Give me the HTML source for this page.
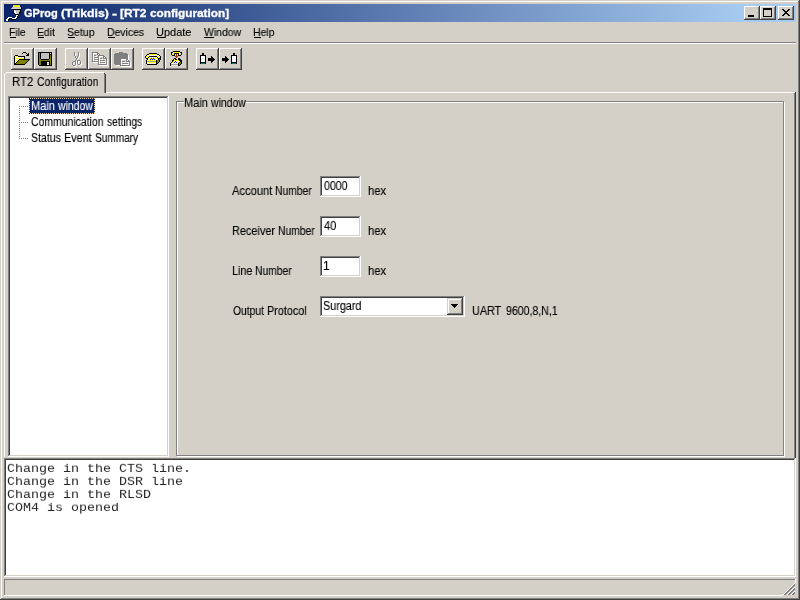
<!DOCTYPE html>
<html>
<head>
<meta charset="utf-8">
<title>GProg (Trikdis) - [RT2 configuration]</title>
<style>
*,*:before,*:after{box-sizing:border-box;margin:0;padding:0}
html,body{width:800px;height:600px;overflow:hidden;background:#d4d0c8}
body{position:relative;font-family:"Liberation Sans",sans-serif;font-size:12px;color:#000}
.a{position:absolute}
.x{position:absolute;white-space:pre;line-height:16px;height:16px;transform-origin:0 0;will-change:transform;-webkit-text-stroke:0.12px currentColor}
.mo{position:absolute;left:7px;color:#262626;white-space:pre;line-height:16px;height:16px;transform-origin:0 0;transform:scale(1,0.9);will-change:transform;font-family:"Liberation Mono",monospace;font-size:13.333px}
#title{left:4px;top:4px;width:792px;height:18px;background:linear-gradient(to right,#0a246a 0%,#a6caf0 93.5%)}
.r{background:linear-gradient(#d4d0c8,#d4d0c8) 2px 2px/calc(100% - 4px) calc(100% - 4px) no-repeat,linear-gradient(#d4d0c8,#d4d0c8) 1px 1px/calc(100% - 3px) calc(100% - 3px) no-repeat,linear-gradient(#808080,#808080) 1px 1px/calc(100% - 2px) calc(100% - 2px) no-repeat,linear-gradient(#fff,#fff) 0 0/calc(100% - 1px) calc(100% - 1px) no-repeat,#404040}
.s{background:linear-gradient(#fff,#fff) 2px 2px/calc(100% - 4px) calc(100% - 4px) no-repeat,linear-gradient(#404040,#404040) 1px 1px/calc(100% - 3px) calc(100% - 3px) no-repeat,linear-gradient(#d4d0c8,#d4d0c8) 1px 1px/calc(100% - 2px) calc(100% - 2px) no-repeat,linear-gradient(#808080,#808080) 0 0/calc(100% - 1px) calc(100% - 1px) no-repeat,#fff}
.rb{background:linear-gradient(#d4d0c8,#d4d0c8) 2px 2px/calc(100% - 4px) calc(100% - 4px) no-repeat,linear-gradient(#fff,#fff) 1px 1px/calc(100% - 3px) calc(100% - 3px) no-repeat,linear-gradient(#808080,#808080) 1px 1px/calc(100% - 2px) calc(100% - 2px) no-repeat,linear-gradient(#d4d0c8,#d4d0c8) 0 0/calc(100% - 1px) calc(100% - 1px) no-repeat,#404040}
.st{background:linear-gradient(#d4d0c8,#d4d0c8) 1px 1px/calc(100% - 2px) calc(100% - 2px) no-repeat,linear-gradient(#808080,#808080) 0 0/calc(100% - 1px) calc(100% - 1px) no-repeat,#fff}
#sep1{left:4px;top:42px;width:792px;height:2px;border-top:1px solid #808080;border-bottom:1px solid #fff}
#sel{left:29px;top:98px;width:66px;height:16px;background:#0a246a;outline:0}
#grpgap{left:184px;top:101px;width:62px;height:2px;background:#d4d0c8}
</style>
</head>
<body>
<div class="a rb" style="left:0;top:0;width:800px;height:600px"></div>
<div class="a" id="title"></div>
<div><div class="x" style="left:24px;top:5px;font-size:11px;font-weight:bold;-webkit-text-stroke:0.3px #fff;color:#fff;">GProg</div> <div class="x" style="left:61px;top:5px;font-size:11px;font-weight:bold;-webkit-text-stroke:0.3px #fff;color:#fff;transform:scale(1.12,1.0);">(Trikdis)</div> <div class="x" style="left:112px;top:5px;font-size:11px;font-weight:bold;-webkit-text-stroke:0.3px #fff;color:#fff;transform:scale(1.4,1.0);">-</div> <div class="x" style="left:120px;top:5px;font-size:11px;font-weight:bold;-webkit-text-stroke:0.3px #fff;color:#fff;transform:scale(1.08,1.0);">[RT2</div> <div class="x" style="left:150px;top:5px;font-size:11px;font-weight:bold;-webkit-text-stroke:0.3px #fff;color:#fff;transform:scale(1.07,1.0);">configuration]</div></div>
<div class="a r" style="left:744px;top:6px;width:16px;height:14px"></div>
<div class="a r" style="left:760px;top:6px;width:16px;height:14px"></div>
<div class="a r" style="left:778px;top:6px;width:16px;height:14px"></div>
<div><div class="x" style="left:9px;top:24px;font-size:11px;transform:scale(0.94,1.0);">File</div> <div class="x" style="left:37px;top:24px;font-size:11px;transform:scale(0.94,1.0);">Edit</div> <div class="x" style="left:67px;top:24px;font-size:11px;transform:scale(0.96,1.0);">Setup</div> <div class="x" style="left:107px;top:24px;font-size:11px;transform:scale(0.95,1.0);">Devices</div> <div class="x" style="left:156px;top:24px;font-size:11px;">Update</div> <div class="x" style="left:204px;top:24px;font-size:11px;transform:scale(0.95,1.0);">Window</div> <div class="x" style="left:253px;top:24px;font-size:11px;transform:scale(0.95,1.0);">Help</div></div>
<div class="a" style="left:10px;top:37px;width:6px;height:1px;background:#000"></div><div class="a" style="left:38px;top:37px;width:6px;height:1px;background:#000"></div><div class="a" style="left:68px;top:37px;width:7px;height:1px;background:#000"></div><div class="a" style="left:108px;top:37px;width:7px;height:1px;background:#000"></div><div class="a" style="left:157px;top:37px;width:8px;height:1px;background:#000"></div><div class="a" style="left:204px;top:37px;width:10px;height:1px;background:#000"></div><div class="a" style="left:254px;top:37px;width:7px;height:1px;background:#000"></div>
<div class="a" id="sep1"></div>
<div class="a r" style="left:11px;top:48px;width:23px;height:22px"></div><div class="a r" style="left:34px;top:48px;width:23px;height:22px"></div><div class="a r" style="left:65px;top:48px;width:23px;height:22px"></div><div class="a r" style="left:88px;top:48px;width:23px;height:22px"></div><div class="a r" style="left:111px;top:48px;width:23px;height:22px"></div><div class="a r" style="left:142px;top:48px;width:23px;height:22px"></div><div class="a r" style="left:165px;top:48px;width:23px;height:22px"></div><div class="a r" style="left:196px;top:48px;width:23px;height:22px"></div><div class="a r" style="left:219px;top:48px;width:23px;height:22px"></div>
<!-- tab page -->
<div class="a" style="left:4px;top:74px;width:1px;height:383px;background:#fff"></div>
<div class="a" style="left:5px;top:73px;width:1px;height:1px;background:#fff"></div>
<div class="a" style="left:6px;top:72px;width:98px;height:1px;background:#fff"></div>
<div class="a" style="left:104px;top:73px;width:1px;height:20px;background:#808080"></div>
<div class="a" style="left:105px;top:74px;width:1px;height:19px;background:#404040"></div>
<div class="a" style="left:104px;top:73px;width:1px;height:1px;background:#404040"></div>
<div class="a" style="left:106px;top:92px;width:689px;height:1px;background:#fff"></div>
<div class="a" style="left:794px;top:93px;width:1px;height:365px;background:#808080"></div>
<div class="a" style="left:795px;top:92px;width:1px;height:366px;background:#404040"></div>
<div><div class="x" style="left:12px;top:74px;font-size:12px;transform:scale(0.95,1.0);">RT2</div> <div class="x" style="left:37px;top:74px;font-size:12px;transform:scale(0.86,1.0);">Configuration</div></div>

<div class="a s" style="left:8px;top:96px;width:161px;height:361px"></div>
<svg class="a" style="left:0;top:0" width="40" height="150" viewBox="0 0 40 150" shape-rendering="crispEdges"><rect x="19" y="106" width="1" height="1" fill="#808080"/><rect x="19" y="108" width="1" height="1" fill="#808080"/><rect x="19" y="110" width="1" height="1" fill="#808080"/><rect x="19" y="112" width="1" height="1" fill="#808080"/><rect x="19" y="114" width="1" height="1" fill="#808080"/><rect x="19" y="116" width="1" height="1" fill="#808080"/><rect x="19" y="118" width="1" height="1" fill="#808080"/><rect x="19" y="120" width="1" height="1" fill="#808080"/><rect x="19" y="122" width="1" height="1" fill="#808080"/><rect x="19" y="124" width="1" height="1" fill="#808080"/><rect x="19" y="126" width="1" height="1" fill="#808080"/><rect x="19" y="128" width="1" height="1" fill="#808080"/><rect x="19" y="130" width="1" height="1" fill="#808080"/><rect x="19" y="132" width="1" height="1" fill="#808080"/><rect x="19" y="134" width="1" height="1" fill="#808080"/><rect x="19" y="136" width="1" height="1" fill="#808080"/><rect x="19" y="138" width="1" height="1" fill="#808080"/><rect x="21" y="106" width="1" height="1" fill="#808080"/><rect x="21" y="122" width="1" height="1" fill="#808080"/><rect x="21" y="138" width="1" height="1" fill="#808080"/><rect x="23" y="106" width="1" height="1" fill="#808080"/><rect x="23" y="122" width="1" height="1" fill="#808080"/><rect x="23" y="138" width="1" height="1" fill="#808080"/><rect x="25" y="106" width="1" height="1" fill="#808080"/><rect x="25" y="122" width="1" height="1" fill="#808080"/><rect x="25" y="138" width="1" height="1" fill="#808080"/><rect x="27" y="106" width="1" height="1" fill="#808080"/><rect x="27" y="122" width="1" height="1" fill="#808080"/><rect x="27" y="138" width="1" height="1" fill="#808080"/></svg>
<div class="a" id="sel"></div>
<svg class="a" style="left:29px;top:98px" width="66" height="16" viewBox="0 0 66 16" shape-rendering="crispEdges"><rect x="0.5" y="0.5" width="65" height="15" fill="none" stroke="#f5db95" stroke-width="1" stroke-dasharray="1 1"/></svg>
<div><div class="x" style="left:31px;top:98px;font-size:12px;color:#fff;transform:scale(0.92,1.0);">Main</div> <div class="x" style="left:58px;top:98px;font-size:12px;color:#fff;transform:scale(0.87,1.0);">window</div></div>
<div><div class="x" style="left:31px;top:114px;font-size:12px;transform:scale(0.87,1.0);">Communication</div> <div class="x" style="left:107px;top:114px;font-size:12px;transform:scale(0.85,1.0);">settings</div></div>
<div><div class="x" style="left:31px;top:130px;font-size:12px;transform:scale(0.88,1.0);">Status</div> <div class="x" style="left:64px;top:130px;font-size:12px;transform:scale(0.9,1.0);">Event</div> <div class="x" style="left:95px;top:130px;font-size:12px;transform:scale(0.84,1.0);">Summary</div></div>

<div class="a" style="left:177px;top:102px;width:608px;height:355px;border:1px solid #fff"></div>
<div class="a" style="left:176px;top:101px;width:608px;height:355px;border:1px solid #808080"></div>
<div class="a" id="grpgap"></div>
<div><div class="x" style="left:184px;top:95px;font-size:12px;transform:scale(0.92,1.0);">Main</div> <div class="x" style="left:211px;top:95px;font-size:12px;transform:scale(0.87,1.0);">window</div></div>

<div><div class="x" style="left:232px;top:183px;font-size:12px;transform:scale(0.93,1.0);">Account</div> <div class="x" style="left:275px;top:183px;font-size:12px;transform:scale(0.86,1.0);">Number</div></div>
<div><div class="x" style="left:232px;top:223px;font-size:12px;transform:scale(0.91,1.0);">Receiver</div> <div class="x" style="left:278px;top:223px;font-size:12px;transform:scale(0.86,1.0);">Number</div></div>
<div><div class="x" style="left:232px;top:263px;font-size:12px;transform:scale(0.9,1.0);">Line</div> <div class="x" style="left:255px;top:263px;font-size:12px;transform:scale(0.86,1.0);">Number</div></div>
<div><div class="x" style="left:233px;top:303px;font-size:12px;transform:scale(0.86,1.0);">Output</div> <div class="x" style="left:267px;top:303px;font-size:12px;transform:scale(0.9,1.0);">Protocol</div></div>

<div class="a s" style="left:320px;top:176px;width:41px;height:21px"></div>
<div class="a s" style="left:320px;top:216px;width:41px;height:21px"></div>
<div class="a s" style="left:320px;top:256px;width:41px;height:21px"></div>
<div class="a s" style="left:320px;top:296px;width:145px;height:21px"></div>
<div class="a rb" style="left:447px;top:298px;width:16px;height:17px"></div>
<div class="x" style="left:324px;top:178px;font-size:12px;transform:scale(0.88,1.0);">0000</div> <div class="x" style="left:324px;top:218px;font-size:12px;transform:scale(0.92,1.0);">40</div> <div class="x" style="left:323px;top:258px;font-size:12px;">1</div> <div class="x" style="left:323px;top:298px;font-size:12px;transform:scale(0.9,1.0);">Surgard</div>
<div class="x" style="left:368px;top:183px;font-size:12px;transform:scale(0.94,1.0);">hex</div> <div class="x" style="left:368px;top:223px;font-size:12px;transform:scale(0.94,1.0);">hex</div> <div class="x" style="left:368px;top:263px;font-size:12px;transform:scale(0.94,1.0);">hex</div> <div><div class="x" style="left:472px;top:303px;font-size:12px;transform:scale(0.9,1.0);">UART</div> <div class="x" style="left:506px;top:303px;font-size:12px;transform:scale(0.88,1.0);">9600,8,N,1</div></div>

<div class="a s" style="left:4px;top:458px;width:792px;height:119px"></div>
<div class="mo" style="top:461.6px">Change in the CTS line.</div>
<div class="mo" style="top:474.6px">Change in the DSR line</div>
<div class="mo" style="top:487.6px">Change in the RLSD</div>
<div class="mo" style="top:500.6px">COM4 is opened</div>
<div class="a st" style="left:4px;top:579px;width:792px;height:17px"></div>
<svg class="a" style="left:783px;top:583px" width="13" height="13" viewBox="0 0 13 13" shape-rendering="crispEdges"><rect x="0" y="0" width="13" height="13" fill="#d4d0c8"/><rect x="11" y="0" width="1" height="1" fill="#fff"/><rect x="10" y="1" width="1" height="1" fill="#fff"/><rect x="11" y="1" width="1" height="1" fill="#808080"/><rect x="9" y="2" width="1" height="1" fill="#fff"/><rect x="10" y="2" width="1" height="1" fill="#808080"/><rect x="11" y="2" width="1" height="1" fill="#808080"/><rect x="8" y="3" width="1" height="1" fill="#fff"/><rect x="9" y="3" width="1" height="1" fill="#808080"/><rect x="10" y="3" width="1" height="1" fill="#808080"/><rect x="7" y="4" width="1" height="1" fill="#fff"/><rect x="8" y="4" width="1" height="1" fill="#808080"/><rect x="9" y="4" width="1" height="1" fill="#808080"/><rect x="11" y="4" width="1" height="1" fill="#fff"/><rect x="6" y="5" width="1" height="1" fill="#fff"/><rect x="7" y="5" width="1" height="1" fill="#808080"/><rect x="8" y="5" width="1" height="1" fill="#808080"/><rect x="10" y="5" width="1" height="1" fill="#fff"/><rect x="11" y="5" width="1" height="1" fill="#808080"/><rect x="5" y="6" width="1" height="1" fill="#fff"/><rect x="6" y="6" width="1" height="1" fill="#808080"/><rect x="7" y="6" width="1" height="1" fill="#808080"/><rect x="9" y="6" width="1" height="1" fill="#fff"/><rect x="10" y="6" width="1" height="1" fill="#808080"/><rect x="11" y="6" width="1" height="1" fill="#808080"/><rect x="4" y="7" width="1" height="1" fill="#fff"/><rect x="5" y="7" width="1" height="1" fill="#808080"/><rect x="6" y="7" width="1" height="1" fill="#808080"/><rect x="8" y="7" width="1" height="1" fill="#fff"/><rect x="9" y="7" width="1" height="1" fill="#808080"/><rect x="10" y="7" width="1" height="1" fill="#808080"/><rect x="3" y="8" width="1" height="1" fill="#fff"/><rect x="4" y="8" width="1" height="1" fill="#808080"/><rect x="5" y="8" width="1" height="1" fill="#808080"/><rect x="7" y="8" width="1" height="1" fill="#fff"/><rect x="8" y="8" width="1" height="1" fill="#808080"/><rect x="9" y="8" width="1" height="1" fill="#808080"/><rect x="11" y="8" width="1" height="1" fill="#fff"/><rect x="2" y="9" width="1" height="1" fill="#fff"/><rect x="3" y="9" width="1" height="1" fill="#808080"/><rect x="4" y="9" width="1" height="1" fill="#808080"/><rect x="6" y="9" width="1" height="1" fill="#fff"/><rect x="7" y="9" width="1" height="1" fill="#808080"/><rect x="8" y="9" width="1" height="1" fill="#808080"/><rect x="10" y="9" width="1" height="1" fill="#fff"/><rect x="11" y="9" width="1" height="1" fill="#808080"/><rect x="1" y="10" width="1" height="1" fill="#fff"/><rect x="2" y="10" width="1" height="1" fill="#808080"/><rect x="3" y="10" width="1" height="1" fill="#808080"/><rect x="5" y="10" width="1" height="1" fill="#fff"/><rect x="6" y="10" width="1" height="1" fill="#808080"/><rect x="7" y="10" width="1" height="1" fill="#808080"/><rect x="9" y="10" width="1" height="1" fill="#fff"/><rect x="10" y="10" width="1" height="1" fill="#808080"/><rect x="11" y="10" width="1" height="1" fill="#808080"/><rect x="0" y="11" width="1" height="1" fill="#fff"/><rect x="1" y="11" width="1" height="1" fill="#808080"/><rect x="2" y="11" width="1" height="1" fill="#808080"/><rect x="4" y="11" width="1" height="1" fill="#fff"/><rect x="5" y="11" width="1" height="1" fill="#808080"/><rect x="6" y="11" width="1" height="1" fill="#808080"/><rect x="8" y="11" width="1" height="1" fill="#fff"/><rect x="9" y="11" width="1" height="1" fill="#808080"/><rect x="10" y="11" width="1" height="1" fill="#808080"/></svg>
<svg class="a" style="left:6px;top:5px" width="16" height="16" viewBox="0 0 16 16" shape-rendering="crispEdges"><rect x="7" y="0" width="7" height="1" fill="#d8d800"/><rect x="7" y="1" width="7" height="1" fill="#ffff00"/><rect x="6" y="2" width="9" height="1" fill="#c0c0c0"/><rect x="15" y="2" width="1" height="1" fill="#000"/><rect x="5" y="3" width="1" height="1" fill="#b0a890"/><rect x="6" y="3" width="9" height="1" fill="#d0d0d0"/><rect x="15" y="3" width="1" height="1" fill="#000"/><rect x="7" y="4" width="8" height="1" fill="#000"/><rect x="8" y="5" width="1" height="1" fill="#fff"/><rect x="9" y="5" width="5" height="1" fill="#c0c0c0"/><rect x="14" y="5" width="1" height="1" fill="#000"/><rect x="8" y="6" width="2" height="1" fill="#fff"/><rect x="10" y="6" width="3" height="1" fill="#c0c0c0"/><rect x="13" y="6" width="1" height="1" fill="#a0a0a0"/><rect x="14" y="6" width="1" height="1" fill="#000"/><rect x="7" y="7" width="1" height="1" fill="#000"/><rect x="8" y="7" width="2" height="1" fill="#fff"/><rect x="10" y="7" width="3" height="1" fill="#c0c0c0"/><rect x="13" y="7" width="2" height="1" fill="#000"/><rect x="8" y="8" width="1" height="1" fill="#000"/><rect x="9" y="8" width="2" height="1" fill="#fff"/><rect x="11" y="8" width="2" height="1" fill="#c0c0c0"/><rect x="13" y="8" width="1" height="1" fill="#000"/><rect x="9" y="9" width="4" height="1" fill="#000"/><rect x="10" y="10" width="2" height="1" fill="#fff"/><rect x="12" y="10" width="1" height="1" fill="#000"/><rect x="10" y="11" width="1" height="1" fill="#fff"/><rect x="11" y="11" width="1" height="1" fill="#000"/><rect x="2" y="12" width="4" height="1" fill="#fff"/><rect x="9" y="12" width="2" height="1" fill="#fff"/><rect x="11" y="12" width="1" height="1" fill="#000"/><rect x="1" y="13" width="2" height="1" fill="#fff"/><rect x="3" y="13" width="3" height="1" fill="#000"/><rect x="6" y="13" width="4" height="1" fill="#fff"/><rect x="10" y="13" width="1" height="1" fill="#000"/><rect x="0" y="14" width="2" height="1" fill="#fff"/><rect x="2" y="14" width="1" height="1" fill="#000"/><rect x="6" y="14" width="4" height="1" fill="#000"/><rect x="0" y="15" width="2" height="1" fill="#fff"/><rect x="2" y="15" width="1" height="1" fill="#000"/></svg><svg class="a" style="left:14px;top:52px" width="16" height="13" viewBox="0 0 16 13" shape-rendering="crispEdges"><rect x="9" y="0" width="3" height="1" fill="#000"/><rect x="8" y="1" width="1" height="1" fill="#000"/><rect x="12" y="1" width="1" height="1" fill="#000"/><rect x="14" y="1" width="1" height="1" fill="#000"/><rect x="13" y="2" width="2" height="1" fill="#000"/><rect x="1" y="3" width="3" height="1" fill="#000"/><rect x="12" y="3" width="3" height="1" fill="#000"/><rect x="0" y="4" width="1" height="1" fill="#000"/><rect x="1" y="4" width="1" height="1" fill="#fff"/><rect x="2" y="4" width="1" height="1" fill="#ffff00"/><rect x="3" y="4" width="1" height="1" fill="#fff"/><rect x="4" y="4" width="7" height="1" fill="#000"/><rect x="0" y="5" width="1" height="1" fill="#000"/><rect x="1" y="5" width="1" height="1" fill="#ffff00"/><rect x="2" y="5" width="1" height="1" fill="#fff"/><rect x="3" y="5" width="1" height="1" fill="#ffff00"/><rect x="4" y="5" width="1" height="1" fill="#fff"/><rect x="5" y="5" width="1" height="1" fill="#ffff00"/><rect x="6" y="5" width="1" height="1" fill="#fff"/><rect x="7" y="5" width="1" height="1" fill="#ffff00"/><rect x="8" y="5" width="1" height="1" fill="#fff"/><rect x="9" y="5" width="1" height="1" fill="#ffff00"/><rect x="10" y="5" width="1" height="1" fill="#000"/><rect x="0" y="6" width="1" height="1" fill="#000"/><rect x="1" y="6" width="1" height="1" fill="#fff"/><rect x="2" y="6" width="1" height="1" fill="#ffff00"/><rect x="3" y="6" width="1" height="1" fill="#fff"/><rect x="4" y="6" width="1" height="1" fill="#ffff00"/><rect x="5" y="6" width="1" height="1" fill="#fff"/><rect x="6" y="6" width="1" height="1" fill="#ffff00"/><rect x="7" y="6" width="1" height="1" fill="#fff"/><rect x="8" y="6" width="1" height="1" fill="#ffff00"/><rect x="9" y="6" width="1" height="1" fill="#fff"/><rect x="10" y="6" width="1" height="1" fill="#000"/><rect x="0" y="7" width="1" height="1" fill="#000"/><rect x="1" y="7" width="1" height="1" fill="#ffff00"/><rect x="2" y="7" width="1" height="1" fill="#fff"/><rect x="3" y="7" width="1" height="1" fill="#ffff00"/><rect x="4" y="7" width="1" height="1" fill="#fff"/><rect x="5" y="7" width="11" height="1" fill="#000"/><rect x="0" y="8" width="1" height="1" fill="#000"/><rect x="1" y="8" width="1" height="1" fill="#fff"/><rect x="2" y="8" width="1" height="1" fill="#ffff00"/><rect x="3" y="8" width="1" height="1" fill="#fff"/><rect x="4" y="8" width="1" height="1" fill="#000"/><rect x="5" y="8" width="9" height="1" fill="#808000"/><rect x="14" y="8" width="1" height="1" fill="#000"/><rect x="0" y="9" width="1" height="1" fill="#000"/><rect x="1" y="9" width="1" height="1" fill="#ffff00"/><rect x="2" y="9" width="1" height="1" fill="#fff"/><rect x="3" y="9" width="1" height="1" fill="#000"/><rect x="4" y="9" width="9" height="1" fill="#808000"/><rect x="13" y="9" width="1" height="1" fill="#000"/><rect x="0" y="10" width="1" height="1" fill="#000"/><rect x="1" y="10" width="1" height="1" fill="#fff"/><rect x="2" y="10" width="1" height="1" fill="#000"/><rect x="3" y="10" width="9" height="1" fill="#808000"/><rect x="12" y="10" width="1" height="1" fill="#000"/><rect x="0" y="11" width="2" height="1" fill="#000"/><rect x="2" y="11" width="9" height="1" fill="#808000"/><rect x="11" y="11" width="1" height="1" fill="#000"/><rect x="0" y="12" width="11" height="1" fill="#000"/></svg><svg class="a" style="left:38px;top:52px" width="14" height="14" viewBox="0 0 14 14" shape-rendering="crispEdges"><rect x="0" y="0" width="14" height="1" fill="#000"/><rect x="0" y="1" width="1" height="1" fill="#000"/><rect x="1" y="1" width="1" height="1" fill="#808000"/><rect x="2" y="1" width="1" height="1" fill="#000"/><rect x="3" y="1" width="8" height="1" fill="#c0c0c0"/><rect x="11" y="1" width="1" height="1" fill="#000"/><rect x="12" y="1" width="1" height="1" fill="#fff"/><rect x="13" y="1" width="1" height="1" fill="#000"/><rect x="0" y="2" width="1" height="1" fill="#000"/><rect x="1" y="2" width="1" height="1" fill="#808000"/><rect x="2" y="2" width="1" height="1" fill="#000"/><rect x="3" y="2" width="8" height="1" fill="#c0c0c0"/><rect x="11" y="2" width="3" height="1" fill="#000"/><rect x="0" y="3" width="1" height="1" fill="#000"/><rect x="1" y="3" width="1" height="1" fill="#808000"/><rect x="2" y="3" width="1" height="1" fill="#000"/><rect x="3" y="3" width="8" height="1" fill="#c0c0c0"/><rect x="11" y="3" width="1" height="1" fill="#000"/><rect x="12" y="3" width="1" height="1" fill="#808000"/><rect x="13" y="3" width="1" height="1" fill="#000"/><rect x="0" y="4" width="1" height="1" fill="#000"/><rect x="1" y="4" width="1" height="1" fill="#808000"/><rect x="2" y="4" width="1" height="1" fill="#000"/><rect x="3" y="4" width="8" height="1" fill="#c0c0c0"/><rect x="11" y="4" width="1" height="1" fill="#000"/><rect x="12" y="4" width="1" height="1" fill="#808000"/><rect x="13" y="4" width="1" height="1" fill="#000"/><rect x="0" y="5" width="1" height="1" fill="#000"/><rect x="1" y="5" width="1" height="1" fill="#808000"/><rect x="2" y="5" width="1" height="1" fill="#000"/><rect x="3" y="5" width="8" height="1" fill="#c0c0c0"/><rect x="11" y="5" width="1" height="1" fill="#000"/><rect x="12" y="5" width="1" height="1" fill="#808000"/><rect x="13" y="5" width="1" height="1" fill="#000"/><rect x="0" y="6" width="1" height="1" fill="#000"/><rect x="1" y="6" width="1" height="1" fill="#808000"/><rect x="2" y="6" width="1" height="1" fill="#000"/><rect x="3" y="6" width="8" height="1" fill="#c0c0c0"/><rect x="11" y="6" width="1" height="1" fill="#000"/><rect x="12" y="6" width="1" height="1" fill="#808000"/><rect x="13" y="6" width="1" height="1" fill="#000"/><rect x="0" y="7" width="1" height="1" fill="#000"/><rect x="1" y="7" width="2" height="1" fill="#808000"/><rect x="3" y="7" width="8" height="1" fill="#000"/><rect x="11" y="7" width="2" height="1" fill="#808000"/><rect x="13" y="7" width="1" height="1" fill="#000"/><rect x="0" y="8" width="1" height="1" fill="#000"/><rect x="1" y="8" width="12" height="1" fill="#808000"/><rect x="13" y="8" width="1" height="1" fill="#000"/><rect x="0" y="9" width="1" height="1" fill="#000"/><rect x="1" y="9" width="2" height="1" fill="#808000"/><rect x="3" y="9" width="9" height="1" fill="#000"/><rect x="12" y="9" width="1" height="1" fill="#808000"/><rect x="13" y="9" width="1" height="1" fill="#000"/><rect x="0" y="10" width="1" height="1" fill="#000"/><rect x="1" y="10" width="2" height="1" fill="#808000"/><rect x="3" y="10" width="6" height="1" fill="#000"/><rect x="9" y="10" width="2" height="1" fill="#fff"/><rect x="11" y="10" width="1" height="1" fill="#000"/><rect x="12" y="10" width="1" height="1" fill="#808000"/><rect x="13" y="10" width="1" height="1" fill="#000"/><rect x="0" y="11" width="1" height="1" fill="#000"/><rect x="1" y="11" width="2" height="1" fill="#808000"/><rect x="3" y="11" width="6" height="1" fill="#000"/><rect x="9" y="11" width="2" height="1" fill="#c0c0c0"/><rect x="11" y="11" width="1" height="1" fill="#000"/><rect x="12" y="11" width="1" height="1" fill="#808000"/><rect x="13" y="11" width="1" height="1" fill="#000"/><rect x="0" y="12" width="1" height="1" fill="#000"/><rect x="1" y="12" width="2" height="1" fill="#808000"/><rect x="3" y="12" width="6" height="1" fill="#000"/><rect x="9" y="12" width="2" height="1" fill="#fff"/><rect x="11" y="12" width="1" height="1" fill="#000"/><rect x="12" y="12" width="1" height="1" fill="#808000"/><rect x="13" y="12" width="1" height="1" fill="#000"/><rect x="1" y="13" width="13" height="1" fill="#000"/></svg><svg class="a" style="left:72px;top:52px" width="10" height="15" viewBox="0 0 10 15" shape-rendering="crispEdges"><rect x="2" y="0" width="1" height="1" fill="#808080"/><rect x="6" y="0" width="1" height="1" fill="#808080"/><rect x="2" y="1" width="1" height="1" fill="#808080"/><rect x="3" y="1" width="1" height="1" fill="#fff"/><rect x="6" y="1" width="1" height="1" fill="#808080"/><rect x="7" y="1" width="1" height="1" fill="#fff"/><rect x="2" y="2" width="1" height="1" fill="#808080"/><rect x="3" y="2" width="1" height="1" fill="#fff"/><rect x="6" y="2" width="1" height="1" fill="#808080"/><rect x="7" y="2" width="1" height="1" fill="#fff"/><rect x="2" y="3" width="1" height="1" fill="#808080"/><rect x="3" y="3" width="1" height="1" fill="#fff"/><rect x="6" y="3" width="1" height="1" fill="#808080"/><rect x="7" y="3" width="1" height="1" fill="#fff"/><rect x="3" y="4" width="1" height="1" fill="#808080"/><rect x="5" y="4" width="1" height="1" fill="#808080"/><rect x="7" y="4" width="1" height="1" fill="#fff"/><rect x="3" y="5" width="1" height="1" fill="#808080"/><rect x="4" y="5" width="1" height="1" fill="#fff"/><rect x="5" y="5" width="1" height="1" fill="#808080"/><rect x="6" y="5" width="1" height="1" fill="#fff"/><rect x="4" y="6" width="1" height="1" fill="#808080"/><rect x="6" y="6" width="1" height="1" fill="#fff"/><rect x="4" y="7" width="1" height="1" fill="#808080"/><rect x="5" y="7" width="1" height="1" fill="#fff"/><rect x="3" y="8" width="1" height="1" fill="#808080"/><rect x="5" y="8" width="3" height="1" fill="#808080"/><rect x="1" y="9" width="3" height="1" fill="#808080"/><rect x="4" y="9" width="1" height="1" fill="#fff"/><rect x="5" y="9" width="1" height="1" fill="#808080"/><rect x="6" y="9" width="2" height="1" fill="#fff"/><rect x="8" y="9" width="1" height="1" fill="#808080"/><rect x="0" y="10" width="1" height="1" fill="#808080"/><rect x="2" y="10" width="1" height="1" fill="#fff"/><rect x="3" y="10" width="1" height="1" fill="#808080"/><rect x="4" y="10" width="1" height="1" fill="#fff"/><rect x="5" y="10" width="1" height="1" fill="#808080"/><rect x="6" y="10" width="1" height="1" fill="#fff"/><rect x="8" y="10" width="1" height="1" fill="#808080"/><rect x="9" y="10" width="1" height="1" fill="#fff"/><rect x="0" y="11" width="1" height="1" fill="#808080"/><rect x="1" y="11" width="1" height="1" fill="#fff"/><rect x="3" y="11" width="1" height="1" fill="#808080"/><rect x="4" y="11" width="1" height="1" fill="#fff"/><rect x="5" y="11" width="1" height="1" fill="#808080"/><rect x="6" y="11" width="1" height="1" fill="#fff"/><rect x="8" y="11" width="1" height="1" fill="#808080"/><rect x="9" y="11" width="1" height="1" fill="#fff"/><rect x="0" y="12" width="1" height="1" fill="#808080"/><rect x="1" y="12" width="1" height="1" fill="#fff"/><rect x="3" y="12" width="1" height="1" fill="#808080"/><rect x="4" y="12" width="1" height="1" fill="#fff"/><rect x="6" y="12" width="2" height="1" fill="#808080"/><rect x="9" y="12" width="1" height="1" fill="#fff"/><rect x="1" y="13" width="2" height="1" fill="#808080"/><rect x="4" y="13" width="1" height="1" fill="#fff"/><rect x="7" y="13" width="2" height="1" fill="#fff"/><rect x="2" y="14" width="2" height="1" fill="#fff"/></svg><svg class="a" style="left:92px;top:52px" width="16" height="14" viewBox="0 0 16 14" shape-rendering="crispEdges"><rect x="0" y="0" width="6" height="1" fill="#808080"/><rect x="0" y="1" width="1" height="1" fill="#808080"/><rect x="1" y="1" width="4" height="1" fill="#fff"/><rect x="5" y="1" width="2" height="1" fill="#808080"/><rect x="0" y="2" width="1" height="1" fill="#808080"/><rect x="1" y="2" width="1" height="1" fill="#fff"/><rect x="5" y="2" width="1" height="1" fill="#808080"/><rect x="6" y="2" width="1" height="1" fill="#fff"/><rect x="7" y="2" width="1" height="1" fill="#808080"/><rect x="0" y="3" width="1" height="1" fill="#808080"/><rect x="1" y="3" width="1" height="1" fill="#fff"/><rect x="2" y="3" width="2" height="1" fill="#808080"/><rect x="6" y="3" width="6" height="1" fill="#808080"/><rect x="0" y="4" width="1" height="1" fill="#808080"/><rect x="1" y="4" width="1" height="1" fill="#fff"/><rect x="3" y="4" width="2" height="1" fill="#fff"/><rect x="6" y="4" width="1" height="1" fill="#808080"/><rect x="7" y="4" width="4" height="1" fill="#fff"/><rect x="11" y="4" width="2" height="1" fill="#808080"/><rect x="0" y="5" width="1" height="1" fill="#808080"/><rect x="1" y="5" width="1" height="1" fill="#fff"/><rect x="2" y="5" width="5" height="1" fill="#808080"/><rect x="7" y="5" width="1" height="1" fill="#fff"/><rect x="11" y="5" width="1" height="1" fill="#808080"/><rect x="12" y="5" width="1" height="1" fill="#fff"/><rect x="13" y="5" width="1" height="1" fill="#808080"/><rect x="0" y="6" width="1" height="1" fill="#808080"/><rect x="1" y="6" width="1" height="1" fill="#fff"/><rect x="3" y="6" width="3" height="1" fill="#fff"/><rect x="6" y="6" width="1" height="1" fill="#808080"/><rect x="7" y="6" width="1" height="1" fill="#fff"/><rect x="8" y="6" width="2" height="1" fill="#808080"/><rect x="11" y="6" width="4" height="1" fill="#808080"/><rect x="0" y="7" width="1" height="1" fill="#808080"/><rect x="1" y="7" width="1" height="1" fill="#fff"/><rect x="2" y="7" width="5" height="1" fill="#808080"/><rect x="7" y="7" width="1" height="1" fill="#fff"/><rect x="9" y="7" width="2" height="1" fill="#fff"/><rect x="12" y="7" width="2" height="1" fill="#fff"/><rect x="14" y="7" width="1" height="1" fill="#808080"/><rect x="15" y="7" width="1" height="1" fill="#fff"/><rect x="0" y="8" width="1" height="1" fill="#808080"/><rect x="1" y="8" width="1" height="1" fill="#fff"/><rect x="3" y="8" width="3" height="1" fill="#fff"/><rect x="6" y="8" width="1" height="1" fill="#808080"/><rect x="7" y="8" width="1" height="1" fill="#fff"/><rect x="8" y="8" width="5" height="1" fill="#808080"/><rect x="14" y="8" width="1" height="1" fill="#808080"/><rect x="15" y="8" width="1" height="1" fill="#fff"/><rect x="0" y="9" width="7" height="1" fill="#808080"/><rect x="7" y="9" width="1" height="1" fill="#fff"/><rect x="9" y="9" width="5" height="1" fill="#fff"/><rect x="14" y="9" width="1" height="1" fill="#808080"/><rect x="15" y="9" width="1" height="1" fill="#fff"/><rect x="1" y="10" width="5" height="1" fill="#fff"/><rect x="6" y="10" width="1" height="1" fill="#808080"/><rect x="7" y="10" width="1" height="1" fill="#fff"/><rect x="8" y="10" width="5" height="1" fill="#808080"/><rect x="14" y="10" width="1" height="1" fill="#808080"/><rect x="15" y="10" width="1" height="1" fill="#fff"/><rect x="6" y="11" width="1" height="1" fill="#808080"/><rect x="7" y="11" width="1" height="1" fill="#fff"/><rect x="9" y="11" width="5" height="1" fill="#fff"/><rect x="14" y="11" width="1" height="1" fill="#808080"/><rect x="15" y="11" width="1" height="1" fill="#fff"/><rect x="6" y="12" width="9" height="1" fill="#808080"/><rect x="15" y="12" width="1" height="1" fill="#fff"/><rect x="7" y="13" width="9" height="1" fill="#fff"/></svg><svg class="a" style="left:114px;top:52px" width="17" height="15" viewBox="0 0 17 15" shape-rendering="crispEdges"><rect x="5" y="0" width="4" height="1" fill="#808080"/><rect x="1" y="1" width="12" height="1" fill="#808080"/><rect x="0" y="2" width="14" height="1" fill="#808080"/><rect x="0" y="3" width="14" height="1" fill="#808080"/><rect x="14" y="3" width="1" height="1" fill="#fff"/><rect x="0" y="4" width="14" height="1" fill="#808080"/><rect x="14" y="4" width="1" height="1" fill="#fff"/><rect x="0" y="5" width="14" height="1" fill="#808080"/><rect x="14" y="5" width="1" height="1" fill="#fff"/><rect x="0" y="6" width="14" height="1" fill="#808080"/><rect x="14" y="6" width="1" height="1" fill="#fff"/><rect x="0" y="7" width="7" height="1" fill="#808080"/><rect x="7" y="7" width="5" height="1" fill="#fff"/><rect x="12" y="7" width="2" height="1" fill="#808080"/><rect x="14" y="7" width="1" height="1" fill="#fff"/><rect x="0" y="8" width="7" height="1" fill="#808080"/><rect x="7" y="8" width="1" height="1" fill="#fff"/><rect x="12" y="8" width="1" height="1" fill="#808080"/><rect x="13" y="8" width="1" height="1" fill="#fff"/><rect x="14" y="8" width="1" height="1" fill="#808080"/><rect x="0" y="9" width="7" height="1" fill="#808080"/><rect x="7" y="9" width="1" height="1" fill="#fff"/><rect x="8" y="9" width="3" height="1" fill="#808080"/><rect x="12" y="9" width="4" height="1" fill="#808080"/><rect x="0" y="10" width="7" height="1" fill="#808080"/><rect x="7" y="10" width="1" height="1" fill="#fff"/><rect x="9" y="10" width="3" height="1" fill="#fff"/><rect x="13" y="10" width="2" height="1" fill="#fff"/><rect x="15" y="10" width="1" height="1" fill="#808080"/><rect x="16" y="10" width="1" height="1" fill="#fff"/><rect x="0" y="11" width="7" height="1" fill="#808080"/><rect x="7" y="11" width="1" height="1" fill="#fff"/><rect x="8" y="11" width="6" height="1" fill="#808080"/><rect x="15" y="11" width="1" height="1" fill="#808080"/><rect x="16" y="11" width="1" height="1" fill="#fff"/><rect x="1" y="12" width="6" height="1" fill="#808080"/><rect x="7" y="12" width="1" height="1" fill="#fff"/><rect x="9" y="12" width="6" height="1" fill="#fff"/><rect x="15" y="12" width="1" height="1" fill="#808080"/><rect x="16" y="12" width="1" height="1" fill="#fff"/><rect x="2" y="13" width="4" height="1" fill="#fff"/><rect x="6" y="13" width="10" height="1" fill="#808080"/><rect x="16" y="13" width="1" height="1" fill="#fff"/><rect x="7" y="14" width="10" height="1" fill="#fff"/></svg><svg class="a" style="left:145px;top:53px" width="16" height="12" viewBox="0 0 16 12" shape-rendering="crispEdges"><rect x="4" y="0" width="8" height="1" fill="#000"/><rect x="2" y="1" width="2" height="1" fill="#000"/><rect x="4" y="1" width="1" height="1" fill="#fff"/><rect x="5" y="1" width="1" height="1" fill="#ffff00"/><rect x="6" y="1" width="1" height="1" fill="#fff"/><rect x="7" y="1" width="1" height="1" fill="#ffff00"/><rect x="8" y="1" width="1" height="1" fill="#fff"/><rect x="9" y="1" width="1" height="1" fill="#ffff00"/><rect x="10" y="1" width="1" height="1" fill="#fff"/><rect x="11" y="1" width="1" height="1" fill="#ffff00"/><rect x="12" y="1" width="2" height="1" fill="#000"/><rect x="1" y="2" width="1" height="1" fill="#000"/><rect x="2" y="2" width="1" height="1" fill="#ffff00"/><rect x="3" y="2" width="1" height="1" fill="#fff"/><rect x="4" y="2" width="1" height="1" fill="#ffff00"/><rect x="5" y="2" width="1" height="1" fill="#fff"/><rect x="6" y="2" width="1" height="1" fill="#ffff00"/><rect x="7" y="2" width="1" height="1" fill="#fff"/><rect x="8" y="2" width="1" height="1" fill="#ffff00"/><rect x="9" y="2" width="1" height="1" fill="#fff"/><rect x="10" y="2" width="1" height="1" fill="#ffff00"/><rect x="11" y="2" width="1" height="1" fill="#fff"/><rect x="12" y="2" width="1" height="1" fill="#ffff00"/><rect x="13" y="2" width="1" height="1" fill="#fff"/><rect x="14" y="2" width="1" height="1" fill="#000"/><rect x="0" y="3" width="1" height="1" fill="#000"/><rect x="1" y="3" width="1" height="1" fill="#ffff00"/><rect x="2" y="3" width="1" height="1" fill="#fff"/><rect x="3" y="3" width="1" height="1" fill="#ffff00"/><rect x="4" y="3" width="8" height="1" fill="#000"/><rect x="12" y="3" width="1" height="1" fill="#fff"/><rect x="13" y="3" width="1" height="1" fill="#ffff00"/><rect x="14" y="3" width="1" height="1" fill="#fff"/><rect x="15" y="3" width="1" height="1" fill="#000"/><rect x="0" y="4" width="1" height="1" fill="#000"/><rect x="1" y="4" width="1" height="1" fill="#fff"/><rect x="2" y="4" width="1" height="1" fill="#ffff00"/><rect x="3" y="4" width="1" height="1" fill="#000"/><rect x="4" y="4" width="1" height="1" fill="#ffff00"/><rect x="5" y="4" width="1" height="1" fill="#fff"/><rect x="6" y="4" width="1" height="1" fill="#ffff00"/><rect x="7" y="4" width="1" height="1" fill="#fff"/><rect x="8" y="4" width="1" height="1" fill="#ffff00"/><rect x="9" y="4" width="1" height="1" fill="#fff"/><rect x="10" y="4" width="1" height="1" fill="#ffff00"/><rect x="11" y="4" width="1" height="1" fill="#fff"/><rect x="12" y="4" width="1" height="1" fill="#000"/><rect x="13" y="4" width="1" height="1" fill="#fff"/><rect x="14" y="4" width="1" height="1" fill="#ffff00"/><rect x="15" y="4" width="1" height="1" fill="#000"/><rect x="1" y="5" width="2" height="1" fill="#000"/><rect x="3" y="5" width="1" height="1" fill="#ffff00"/><rect x="4" y="5" width="1" height="1" fill="#fff"/><rect x="5" y="5" width="1" height="1" fill="#ffff00"/><rect x="6" y="5" width="1" height="1" fill="#0000ff"/><rect x="7" y="5" width="1" height="1" fill="#ffff00"/><rect x="8" y="5" width="1" height="1" fill="#0000ff"/><rect x="9" y="5" width="1" height="1" fill="#ffff00"/><rect x="10" y="5" width="1" height="1" fill="#fff"/><rect x="11" y="5" width="1" height="1" fill="#ffff00"/><rect x="12" y="5" width="1" height="1" fill="#fff"/><rect x="13" y="5" width="3" height="1" fill="#000"/><rect x="2" y="6" width="1" height="1" fill="#000"/><rect x="3" y="6" width="1" height="1" fill="#fff"/><rect x="4" y="6" width="1" height="1" fill="#ffff00"/><rect x="5" y="6" width="1" height="1" fill="#0000ff"/><rect x="6" y="6" width="1" height="1" fill="#ffff00"/><rect x="7" y="6" width="1" height="1" fill="#0000ff"/><rect x="8" y="6" width="1" height="1" fill="#ffff00"/><rect x="9" y="6" width="1" height="1" fill="#0000ff"/><rect x="10" y="6" width="1" height="1" fill="#ffff00"/><rect x="11" y="6" width="1" height="1" fill="#fff"/><rect x="12" y="6" width="1" height="1" fill="#ffff00"/><rect x="13" y="6" width="1" height="1" fill="#000"/><rect x="14" y="6" width="1" height="1" fill="#808000"/><rect x="15" y="6" width="1" height="1" fill="#000"/><rect x="1" y="7" width="1" height="1" fill="#000"/><rect x="2" y="7" width="1" height="1" fill="#fff"/><rect x="3" y="7" width="1" height="1" fill="#ffff00"/><rect x="4" y="7" width="1" height="1" fill="#fff"/><rect x="5" y="7" width="1" height="1" fill="#ffff00"/><rect x="6" y="7" width="1" height="1" fill="#fff"/><rect x="7" y="7" width="1" height="1" fill="#ffff00"/><rect x="8" y="7" width="1" height="1" fill="#fff"/><rect x="9" y="7" width="1" height="1" fill="#ffff00"/><rect x="10" y="7" width="1" height="1" fill="#fff"/><rect x="11" y="7" width="1" height="1" fill="#000"/><rect x="12" y="7" width="2" height="1" fill="#808000"/><rect x="14" y="7" width="1" height="1" fill="#000"/><rect x="1" y="8" width="1" height="1" fill="#000"/><rect x="2" y="8" width="9" height="1" fill="#a0a0a0"/><rect x="11" y="8" width="1" height="1" fill="#000"/><rect x="12" y="8" width="2" height="1" fill="#808000"/><rect x="14" y="8" width="1" height="1" fill="#000"/><rect x="1" y="9" width="1" height="1" fill="#000"/><rect x="2" y="9" width="1" height="1" fill="#fff"/><rect x="3" y="9" width="1" height="1" fill="#ffff00"/><rect x="4" y="9" width="1" height="1" fill="#fff"/><rect x="5" y="9" width="1" height="1" fill="#ffff00"/><rect x="6" y="9" width="1" height="1" fill="#fff"/><rect x="7" y="9" width="1" height="1" fill="#ffff00"/><rect x="8" y="9" width="1" height="1" fill="#fff"/><rect x="9" y="9" width="1" height="1" fill="#ffff00"/><rect x="10" y="9" width="1" height="1" fill="#fff"/><rect x="11" y="9" width="1" height="1" fill="#000"/><rect x="12" y="9" width="1" height="1" fill="#808000"/><rect x="13" y="9" width="1" height="1" fill="#000"/><rect x="1" y="10" width="1" height="1" fill="#000"/><rect x="2" y="10" width="1" height="1" fill="#ffff00"/><rect x="3" y="10" width="1" height="1" fill="#fff"/><rect x="4" y="10" width="1" height="1" fill="#ffff00"/><rect x="5" y="10" width="1" height="1" fill="#fff"/><rect x="6" y="10" width="1" height="1" fill="#ffff00"/><rect x="7" y="10" width="1" height="1" fill="#fff"/><rect x="8" y="10" width="1" height="1" fill="#ffff00"/><rect x="9" y="10" width="1" height="1" fill="#fff"/><rect x="10" y="10" width="1" height="1" fill="#ffff00"/><rect x="11" y="10" width="2" height="1" fill="#000"/><rect x="2" y="11" width="10" height="1" fill="#000"/></svg><svg class="a" style="left:170px;top:51px" width="13" height="15" viewBox="0 0 13 15" shape-rendering="crispEdges"><rect x="3" y="0" width="7" height="1" fill="#000"/><rect x="1" y="1" width="2" height="1" fill="#000"/><rect x="3" y="1" width="1" height="1" fill="#fff"/><rect x="4" y="1" width="1" height="1" fill="#ffff00"/><rect x="5" y="1" width="1" height="1" fill="#fff"/><rect x="6" y="1" width="1" height="1" fill="#ffff00"/><rect x="7" y="1" width="1" height="1" fill="#fff"/><rect x="8" y="1" width="1" height="1" fill="#ffff00"/><rect x="9" y="1" width="1" height="1" fill="#fff"/><rect x="10" y="1" width="2" height="1" fill="#000"/><rect x="1" y="2" width="1" height="1" fill="#000"/><rect x="2" y="2" width="1" height="1" fill="#fff"/><rect x="3" y="2" width="1" height="1" fill="#ffff00"/><rect x="4" y="2" width="5" height="1" fill="#000"/><rect x="9" y="2" width="1" height="1" fill="#ffff00"/><rect x="10" y="2" width="1" height="1" fill="#fff"/><rect x="11" y="2" width="1" height="1" fill="#000"/><rect x="1" y="3" width="1" height="1" fill="#000"/><rect x="2" y="3" width="1" height="1" fill="#ffff00"/><rect x="3" y="3" width="1" height="1" fill="#fff"/><rect x="4" y="3" width="1" height="1" fill="#000"/><rect x="6" y="3" width="1" height="1" fill="#b02810"/><rect x="8" y="3" width="1" height="1" fill="#000"/><rect x="9" y="3" width="1" height="1" fill="#fff"/><rect x="10" y="3" width="1" height="1" fill="#ffff00"/><rect x="11" y="3" width="1" height="1" fill="#000"/><rect x="2" y="4" width="3" height="1" fill="#000"/><rect x="6" y="4" width="1" height="1" fill="#b02810"/><rect x="8" y="4" width="3" height="1" fill="#000"/><rect x="5" y="5" width="3" height="1" fill="#b02810"/><rect x="6" y="6" width="1" height="1" fill="#b02810"/><rect x="4" y="7" width="2" height="1" fill="#000"/><rect x="8" y="7" width="2" height="1" fill="#000"/><rect x="3" y="8" width="1" height="1" fill="#000"/><rect x="4" y="8" width="1" height="1" fill="#ffff00"/><rect x="5" y="8" width="2" height="1" fill="#000"/><rect x="7" y="8" width="1" height="1" fill="#ffff00"/><rect x="8" y="8" width="3" height="1" fill="#000"/><rect x="2" y="9" width="2" height="1" fill="#000"/><rect x="4" y="9" width="1" height="1" fill="#ffff00"/><rect x="5" y="9" width="1" height="1" fill="#fff"/><rect x="6" y="9" width="1" height="1" fill="#ffff00"/><rect x="7" y="9" width="1" height="1" fill="#fff"/><rect x="8" y="9" width="1" height="1" fill="#ffff00"/><rect x="9" y="9" width="3" height="1" fill="#000"/><rect x="2" y="10" width="1" height="1" fill="#000"/><rect x="3" y="10" width="1" height="1" fill="#ffff00"/><rect x="4" y="10" width="1" height="1" fill="#fff"/><rect x="5" y="10" width="1" height="1" fill="#0000ff"/><rect x="6" y="10" width="1" height="1" fill="#fff"/><rect x="7" y="10" width="1" height="1" fill="#ffff00"/><rect x="8" y="10" width="1" height="1" fill="#fff"/><rect x="9" y="10" width="1" height="1" fill="#ffff00"/><rect x="10" y="10" width="2" height="1" fill="#000"/><rect x="1" y="11" width="1" height="1" fill="#000"/><rect x="2" y="11" width="1" height="1" fill="#ffff00"/><rect x="3" y="11" width="1" height="1" fill="#fff"/><rect x="4" y="11" width="1" height="1" fill="#0000ff"/><rect x="5" y="11" width="1" height="1" fill="#fff"/><rect x="6" y="11" width="1" height="1" fill="#0000ff"/><rect x="7" y="11" width="1" height="1" fill="#fff"/><rect x="8" y="11" width="1" height="1" fill="#ffff00"/><rect x="9" y="11" width="1" height="1" fill="#000"/><rect x="10" y="11" width="1" height="1" fill="#808000"/><rect x="11" y="11" width="1" height="1" fill="#000"/><rect x="0" y="12" width="1" height="1" fill="#000"/><rect x="1" y="12" width="1" height="1" fill="#ffff00"/><rect x="2" y="12" width="1" height="1" fill="#fff"/><rect x="3" y="12" width="1" height="1" fill="#ffff00"/><rect x="4" y="12" width="1" height="1" fill="#fff"/><rect x="5" y="12" width="1" height="1" fill="#ffff00"/><rect x="6" y="12" width="1" height="1" fill="#fff"/><rect x="7" y="12" width="1" height="1" fill="#ffff00"/><rect x="8" y="12" width="1" height="1" fill="#000"/><rect x="9" y="12" width="2" height="1" fill="#808000"/><rect x="11" y="12" width="1" height="1" fill="#000"/><rect x="0" y="13" width="1" height="1" fill="#000"/><rect x="1" y="13" width="7" height="1" fill="#a0a0a0"/><rect x="8" y="13" width="1" height="1" fill="#000"/><rect x="9" y="13" width="1" height="1" fill="#808000"/><rect x="10" y="13" width="1" height="1" fill="#000"/><rect x="0" y="14" width="1" height="1" fill="#000"/><rect x="1" y="14" width="1" height="1" fill="#ffff00"/><rect x="2" y="14" width="1" height="1" fill="#fff"/><rect x="3" y="14" width="1" height="1" fill="#ffff00"/><rect x="4" y="14" width="1" height="1" fill="#fff"/><rect x="5" y="14" width="1" height="1" fill="#ffff00"/><rect x="6" y="14" width="1" height="1" fill="#fff"/><rect x="7" y="14" width="1" height="1" fill="#ffff00"/><rect x="8" y="14" width="2" height="1" fill="#000"/></svg><svg class="a" style="left:200px;top:53px" width="15" height="11" viewBox="0 0 15 11" shape-rendering="crispEdges"><rect x="2" y="0" width="2" height="1" fill="#000"/><rect x="2" y="1" width="2" height="1" fill="#000"/><rect x="0" y="2" width="6" height="1" fill="#000"/><rect x="0" y="3" width="1" height="1" fill="#000"/><rect x="1" y="3" width="4" height="1" fill="#fff"/><rect x="5" y="3" width="1" height="1" fill="#000"/><rect x="11" y="3" width="1" height="1" fill="#000"/><rect x="0" y="4" width="1" height="1" fill="#000"/><rect x="1" y="4" width="4" height="1" fill="#fff"/><rect x="5" y="4" width="1" height="1" fill="#000"/><rect x="11" y="4" width="2" height="1" fill="#000"/><rect x="0" y="5" width="1" height="1" fill="#000"/><rect x="1" y="5" width="4" height="1" fill="#fff"/><rect x="5" y="5" width="1" height="1" fill="#000"/><rect x="8" y="5" width="6" height="1" fill="#000"/><rect x="0" y="6" width="1" height="1" fill="#000"/><rect x="1" y="6" width="4" height="1" fill="#fff"/><rect x="5" y="6" width="1" height="1" fill="#000"/><rect x="8" y="6" width="7" height="1" fill="#000"/><rect x="0" y="7" width="1" height="1" fill="#000"/><rect x="1" y="7" width="4" height="1" fill="#fff"/><rect x="5" y="7" width="1" height="1" fill="#000"/><rect x="8" y="7" width="6" height="1" fill="#000"/><rect x="0" y="8" width="1" height="1" fill="#000"/><rect x="1" y="8" width="4" height="1" fill="#fff"/><rect x="5" y="8" width="1" height="1" fill="#000"/><rect x="11" y="8" width="2" height="1" fill="#000"/><rect x="0" y="9" width="6" height="1" fill="#000"/><rect x="11" y="9" width="1" height="1" fill="#000"/><rect x="0" y="10" width="1" height="1" fill="#000"/><rect x="1" y="10" width="4" height="1" fill="#008080"/><rect x="5" y="10" width="1" height="1" fill="#000"/></svg><svg class="a" style="left:222px;top:53px" width="15" height="11" viewBox="0 0 15 11" shape-rendering="crispEdges"><rect x="11" y="0" width="2" height="1" fill="#000"/><rect x="11" y="1" width="2" height="1" fill="#000"/><rect x="9" y="2" width="6" height="1" fill="#000"/><rect x="3" y="3" width="1" height="1" fill="#000"/><rect x="9" y="3" width="1" height="1" fill="#000"/><rect x="10" y="3" width="4" height="1" fill="#fff"/><rect x="14" y="3" width="1" height="1" fill="#000"/><rect x="3" y="4" width="2" height="1" fill="#000"/><rect x="9" y="4" width="1" height="1" fill="#000"/><rect x="10" y="4" width="4" height="1" fill="#fff"/><rect x="14" y="4" width="1" height="1" fill="#000"/><rect x="0" y="5" width="6" height="1" fill="#000"/><rect x="9" y="5" width="1" height="1" fill="#000"/><rect x="10" y="5" width="4" height="1" fill="#fff"/><rect x="14" y="5" width="1" height="1" fill="#000"/><rect x="0" y="6" width="7" height="1" fill="#000"/><rect x="9" y="6" width="1" height="1" fill="#000"/><rect x="10" y="6" width="4" height="1" fill="#fff"/><rect x="14" y="6" width="1" height="1" fill="#000"/><rect x="0" y="7" width="6" height="1" fill="#000"/><rect x="9" y="7" width="1" height="1" fill="#000"/><rect x="10" y="7" width="4" height="1" fill="#fff"/><rect x="14" y="7" width="1" height="1" fill="#000"/><rect x="3" y="8" width="2" height="1" fill="#000"/><rect x="9" y="8" width="1" height="1" fill="#000"/><rect x="10" y="8" width="4" height="1" fill="#fff"/><rect x="14" y="8" width="1" height="1" fill="#000"/><rect x="3" y="9" width="1" height="1" fill="#000"/><rect x="9" y="9" width="6" height="1" fill="#000"/><rect x="9" y="10" width="1" height="1" fill="#000"/><rect x="10" y="10" width="4" height="1" fill="#008080"/><rect x="14" y="10" width="1" height="1" fill="#000"/></svg><svg class="a" style="left:748px;top:15px" width="6" height="2" viewBox="0 0 6 2" shape-rendering="crispEdges"><rect x="0" y="0" width="6" height="1" fill="#000"/><rect x="0" y="1" width="6" height="1" fill="#000"/></svg><svg class="a" style="left:763px;top:8px" width="9" height="9" viewBox="0 0 9 9" shape-rendering="crispEdges"><rect x="0" y="0" width="9" height="1" fill="#000"/><rect x="0" y="1" width="9" height="1" fill="#000"/><rect x="0" y="2" width="1" height="1" fill="#000"/><rect x="8" y="2" width="1" height="1" fill="#000"/><rect x="0" y="3" width="1" height="1" fill="#000"/><rect x="8" y="3" width="1" height="1" fill="#000"/><rect x="0" y="4" width="1" height="1" fill="#000"/><rect x="8" y="4" width="1" height="1" fill="#000"/><rect x="0" y="5" width="1" height="1" fill="#000"/><rect x="8" y="5" width="1" height="1" fill="#000"/><rect x="0" y="6" width="1" height="1" fill="#000"/><rect x="8" y="6" width="1" height="1" fill="#000"/><rect x="0" y="7" width="1" height="1" fill="#000"/><rect x="8" y="7" width="1" height="1" fill="#000"/><rect x="0" y="8" width="9" height="1" fill="#000"/></svg><svg class="a" style="left:782px;top:9px" width="8" height="7" viewBox="0 0 8 7" shape-rendering="crispEdges"><rect x="0" y="0" width="2" height="1" fill="#000"/><rect x="6" y="0" width="2" height="1" fill="#000"/><rect x="1" y="1" width="2" height="1" fill="#000"/><rect x="5" y="1" width="2" height="1" fill="#000"/><rect x="2" y="2" width="4" height="1" fill="#000"/><rect x="3" y="3" width="2" height="1" fill="#000"/><rect x="2" y="4" width="4" height="1" fill="#000"/><rect x="1" y="5" width="2" height="1" fill="#000"/><rect x="5" y="5" width="2" height="1" fill="#000"/><rect x="0" y="6" width="2" height="1" fill="#000"/><rect x="6" y="6" width="2" height="1" fill="#000"/></svg><svg class="a" style="left:451px;top:304px" width="7" height="4" viewBox="0 0 7 4" shape-rendering="crispEdges"><rect x="0" y="0" width="7" height="1" fill="#000"/><rect x="1" y="1" width="5" height="1" fill="#000"/><rect x="2" y="2" width="3" height="1" fill="#000"/><rect x="3" y="3" width="1" height="1" fill="#000"/></svg>
</body>
</html>
